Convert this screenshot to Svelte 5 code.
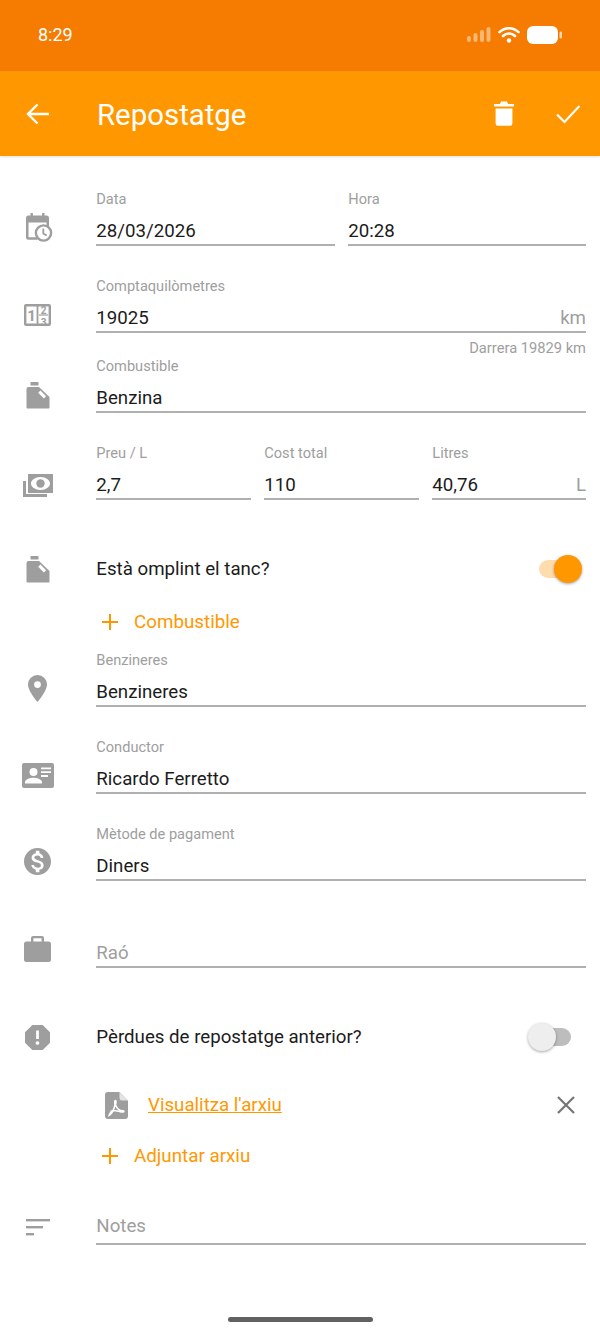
<script>
  const top = [
    { label: 'Data', value: '28/03/2026' },
    { label: 'Hora', value: '20:28' },
  ];
  const prices = [
    { label: 'Preu / L', value: '2,7' },
    { label: 'Cost total', value: '110' },
    { label: 'Litres', value: '40,76', unit: 'L' },
  ];
  const sort = [24, 17, 8];
</script>

{#snippet can()}
  <svg class="ico" width="24" height="27" viewBox="0 0 24 27">
    <rect x="4.500" y="0" width="8" height="3.500" rx="0.500" />
    <path fill-rule="evenodd" d="M2.500 5H13L23.500 15V25.500a1 1 0 0 1-1 1H1.500a1 1 0 0 1-1-1V7a2 2 0 0 1 2-2zM14.400 8.600l-2.200 2.200 5.700 5.600 2.200-2.200z" />
  </svg>
{/snippet}

{#snippet plus()}
  <svg width="18" height="18" viewBox="0 0 18 18"><path d="M9 1v16M1 9h16" fill="none" stroke="#ff9800" stroke-width="2" /></svg>
{/snippet}

<div class="page">
  <header class="status">
    <span class="time">8:29</span>
    <div class="status-icons">
      <svg width="24" height="15" viewBox="0 0 24 15" fill="#fff">
        <rect x="0" y="9" width="4" height="6" rx="2" opacity="0.45" />
        <rect x="6.500" y="6" width="4" height="9" rx="2" opacity="0.45" />
        <rect x="13" y="3" width="4" height="12" rx="2" opacity="0.45" />
        <rect x="19.500" y="0" width="4" height="15" rx="2" opacity="0.45" />
      </svg>
      <svg width="22" height="17" viewBox="0 0 22 17">
        <path d="M1.500 6.200a13.500 13.500 0 0 1 19 0M5 10a8.600 8.600 0 0 1 12 0" fill="none" stroke="#fff" stroke-width="2.600" stroke-linecap="round" />
        <circle cx="11" cy="14.500" r="2.200" fill="#fff" />
      </svg>
      <svg width="35" height="18" viewBox="0 0 35 18" fill="#fff">
        <rect x="0" y="0" width="31" height="18" rx="6" />
        <rect x="32.500" y="5.500" width="2.500" height="7" rx="1.200" opacity="0.7" />
      </svg>
    </div>
  </header>

  <header class="appbar">
    <svg class="back" width="24" height="22" viewBox="0 0 24 22"><path d="M23 11H2M11.500 1.500 2 11l9.500 9.500" fill="none" stroke="#fff" stroke-width="2.400" /></svg>
    <h1>Repostatge</h1>
    <svg class="trash" width="20" height="25" viewBox="0 0 20 25" fill="#fff">
      <path d="M0 3h6l1-2.400h6L14 3h6v2.600H0zM1.600 7.400h16.800v15.200a2.200 2.200 0 0 1-2.200 2.200H3.800a2.200 2.200 0 0 1-2.200-2.200z" />
    </svg>
    <svg class="check" width="24" height="20" viewBox="0 0 24 20"><path d="M1 10.500l7.500 7.500L23.500 2" fill="none" stroke="#fff" stroke-width="2.200" /></svg>
  </header>

  <main class="form">
    <section class="row">
      <div class="slot t24">
        <svg class="ico cal" width="27" height="29" viewBox="0 0 27 29">
          <path fill-rule="evenodd" d="M4.500 0h2.400v2.400h9.200V0h2.400v2.400h2A2.500 2.500 0 0 1 23 4.900v8.100h-2.500V9.500H2.500v14.800h9v2.500H2.500A2.500 2.500 0 0 1 0 24.300V4.900a2.500 2.500 0 0 1 2.500-2.500h2z" />
          <circle cx="17.500" cy="20" r="7.600" fill="#fff" stroke="#9e9e9e" stroke-width="2.400" />
          <path d="M17.300 15.500v4.900l3.400 2.100" fill="none" stroke="#9e9e9e" stroke-width="1.800" />
        </svg>
      </div>
      <div class="cols two">
        {#each top as f}
          <div class="field"><span class="lbl">{f.label}</span><div class="val">{f.value}</div></div>
        {/each}
      </div>
    </section>

    <section class="row r-gap">
      <div class="slot t28">
        <svg class="ico" width="27" height="22" viewBox="0 0 27 22">
          <path fill-rule="evenodd" d="M2 0h23a2 2 0 0 1 2 2v18a2 2 0 0 1-2 2H2a2 2 0 0 1-2-2V2a2 2 0 0 1 2-2zm.4 2.400v17.200h10.200V2.400zm12 0v17.200h10.200V2.400z" />
          <text x="7.500" y="16.500" text-anchor="middle" class="num">1</text>
          <text x="19.500" y="9.500" text-anchor="middle" class="num sm">2</text>
          <text x="19.500" y="21.500" text-anchor="middle" class="num sm">3</text>
          <path d="M15 11h9" stroke="#9e9e9e" stroke-width="1.200" />
        </svg>
      </div>
      <div class="stack">
        <div class="field"><span class="lbl">Comptaquilòmetres</span><div class="val">19025<span class="unit">km</span></div></div>
        <p class="hint">Darrera 19829 km</p>
      </div>
    </section>

    <section class="row">
      <div class="slot t26">{@render can()}</div>
      <div class="field"><span class="lbl">Combustible</span><div class="val">Benzina</div></div>
    </section>

    <section class="row r-gap">
      <div class="slot t31">
        <svg class="ico" width="30" height="23" viewBox="0 0 30 23">
          <path fill-rule="evenodd" d="M5 0h25v19H5zM17.500 3C12 3 8 6 8 9.500S12 16 17.500 16 27 13 27 9.500 23 3 17.500 3z" />
          <circle cx="17.500" cy="9.500" r="4.200" />
          <path d="M0 7h3v13h21v3H0z" />
        </svg>
      </div>
      <div class="cols three">
        {#each prices as f}
          <div class="field">
            <span class="lbl">{f.label}</span>
            <div class="val">{f.value}{#if f.unit}<span class="unit">{f.unit}</span>{/if}</div>
          </div>
        {/each}
      </div>
    </section>

    <section class="row line r-tank">
      <div class="slot mid">{@render can()}</div>
      <div class="toggle-row">
        <span class="txt">Està omplint el tanc?</span>
        <span class="switch on"><span class="knob"></span></span>
      </div>
    </section>

    <section class="row r-add">
      <div class="slot"></div>
      <div class="add">{@render plus()}<span>Combustible</span></div>
    </section>

    <section class="row r-small">
      <div class="slot t25">
        <svg class="ico" width="19" height="27" viewBox="0 0 19 27">
          <path fill-rule="evenodd" d="M9.500 0A9.500 9.500 0 0 1 19 9.500C19 16 9.500 27 9.500 27S0 16 0 9.500A9.500 9.500 0 0 1 9.500 0zm0 6.200a3.400 3.400 0 1 0 0 6.800 3.400 3.400 0 0 0 0-6.800z" />
        </svg>
      </div>
      <div class="field"><span class="lbl">Benzineres</span><div class="val">Benzineres</div></div>
    </section>

    <section class="row r-gap">
      <div class="slot t26">
        <svg class="ico" width="32" height="25" viewBox="0 0 32 25">
          <path fill-rule="evenodd" d="M2 0h28a2 2 0 0 1 2 2v21a2 2 0 0 1-2 2H2a2 2 0 0 1-2-2V2a2 2 0 0 1 2-2zm9.500 5a4 4 0 1 0 0 8 4 4 0 0 0 0-8zM3 20.500h17v-1.400c0-2.800-5.600-4.300-8.500-4.300S3 16.300 3 19.100zM19 4.500v1.800h10V4.500zm0 3.800v1.800h10V8.300zm0 3.800v1.800h7v-1.800z" />
        </svg>
      </div>
      <div class="field"><span class="lbl">Conductor</span><div class="val">Ricardo Ferretto</div></div>
    </section>

    <section class="row r-gap">
      <div class="slot t24">
        <svg class="ico" width="27" height="27" viewBox="2 2 20 20">
          <path d="M12 2C6.480 2 2 6.480 2 12s4.480 10 10 10 10-4.480 10-10S17.520 2 12 2zm1.410 16.090V20h-2.670v-1.930c-1.710-.36-3.160-1.460-3.270-3.400h1.960c.1 1.050.82 1.870 2.650 1.870 1.960 0 2.400-.98 2.400-1.590 0-.83-.44-1.610-2.670-2.140-2.480-.6-4.180-1.620-4.180-3.670 0-1.720 1.390-2.840 3.110-3.210V4h2.670v1.950c1.860.45 2.790 1.860 2.870 3.390H14.300c-.05-1.110-.64-1.870-2.220-1.870-1.500 0-2.400.68-2.400 1.640 0 .84.65 1.390 2.670 1.910s4.180 1.390 4.180 3.910c-.01 1.830-1.380 2.830-3.120 3.160z" />
        </svg>
      </div>
      <div class="field"><span class="lbl">Mètode de pagament</span><div class="val">Diners</div></div>
    </section>

    <section class="row r-gap">
      <div class="slot t25">
        <svg class="ico" width="27" height="26" viewBox="0 0 27 26">
          <path fill-rule="evenodd" d="M9 0h9a2 2 0 0 1 2 2v3.400h4.500A2.500 2.500 0 0 1 27 7.900v15.600a2.500 2.500 0 0 1-2.500 2.500h-22A2.500 2.500 0 0 1 0 23.500V7.900a2.500 2.500 0 0 1 2.500-2.500H7V2a2 2 0 0 1 2-2zm.4 2.200v3.200h8.200V2.200z" />
        </svg>
      </div>
      <div class="field"><span class="lbl"></span><div class="val empty">Raó</div></div>
    </section>

    <section class="row line r-tank">
      <div class="slot mid">
        <svg class="ico" width="25" height="25" viewBox="3 3 18 18">
          <path d="M15.730 3H8.270L3 8.270v7.460L8.270 21h7.460L21 15.730V8.270L15.730 3zM12 17.300c-.72 0-1.300-.58-1.300-1.300 0-.72.58-1.300 1.300-1.300.72 0 1.300.58 1.300 1.300 0 .72-.58 1.300-1.300 1.300zm1-4.300h-2V7h2v6z" />
        </svg>
      </div>
      <div class="toggle-row">
        <span class="txt">Pèrdues de repostatge anterior?</span>
        <span class="switch"><span class="knob"></span></span>
      </div>
    </section>

    <section class="row line r-file">
      <div class="slot"></div>
      <div class="file">
        <svg class="ico pdf" width="23" height="27" viewBox="0 0 23 27">
          <path d="M3 0h11.500L23 8.500V24a3 3 0 0 1-3 3H3a3 3 0 0 1-3-3V3a3 3 0 0 1 3-3z" />
          <path d="M14.500 0v6a2.500 2.500 0 0 0 2.500 2.500h6z" fill="#e3e3e3" />
          <path d="M4 23.500c2.500-1.500 5-6 6-11-.6-2.500-.4-4 .4-4s1 1.500.1 4c1 3 3.500 5.500 5 6 2 .2 3.500.2 3.500 1s-2.500.8-4.500 0c-3-.4-6-1.500-8-.6-1.500 2.800-2.500 4.300-2.500 4.600z" fill="none" stroke="#fff" stroke-width="1.500" />
        </svg>
        <a class="link" href="#top">Visualitza l'arxiu</a>
        <svg class="close" width="20" height="20" viewBox="0 0 20 20"><path d="M2 2l16 16M18 2 2 18" fill="none" stroke="#757575" stroke-width="2.200" /></svg>
      </div>
    </section>

    <section class="row r-add2">
      <div class="slot"></div>
      <div class="add">{@render plus()}<span>Adjuntar arxiu</span></div>
    </section>

    <section class="row r-notes">
      <div class="slot t31">
        <svg class="ico" width="24" height="17" viewBox="0 0 24 17">
          {#each sort as w, i}
            <rect x="0" y={i * 7} width={w} height="2.400" />
          {/each}
        </svg>
      </div>
      <div class="field"><span class="lbl"></span><div class="val empty">Notes</div></div>
    </section>
  </main>

  <div class="home"><span></span></div>
</div>

<style>
  :global(body) { margin: 0; background: #fff; }
  .page { width: 600px; height: 1336px; overflow: hidden; font-family: Roboto, "Liberation Sans", sans-serif; color: #1c1c1c; }

  .status { height: 71px; background: #f57c00; display: flex; align-items: center; justify-content: space-between; padding: 0 38px 2px; box-sizing: border-box; color: #fff; }
  .time { font-size: 18px; }
  .status-icons { display: flex; align-items: center; gap: 7px; }

  .appbar { height: 85px; background: #ff9800; display: flex; align-items: center; color: #fff; box-shadow: 0 1px 2px rgba(0, 0, 0, 0.12); position: relative; }
  .appbar h1 { margin: 2px 0 0 47px; font-size: 29.400px; font-weight: 400; flex: 1; }
  .back { margin-left: 26px; }
  .trash { margin-right: 42px; }
  .check { margin-right: 20px; }

  .form { display: flex; flex-direction: column; padding-top: 33px; }
  .row { display: flex; padding-right: 14px; }
  .slot { width: 75px; margin-right: 21px; flex: none; display: flex; justify-content: center; align-items: flex-start; box-sizing: border-box; }
  .slot.mid { align-items: center; }
  .t24 { padding-top: 24px; }
  .t25 { padding-top: 25px; }
  .t26 { padding-top: 26px; }
  .t28 { padding-top: 28px; }
  .t31 { padding-top: 31px; }
  .ico { fill: #9e9e9e; }
  .cal { margin-left: 3px; }

  .r-gap { margin-top: 30px; }
  .r-tank { margin-top: 49px; }
  .r-add { margin-top: 15px; height: 36px; }
  .r-small { margin-top: 10px; }
  .r-file { margin-top: 28px; }
  .r-add2 { margin-top: 13px; height: 36px; }
  .r-notes { margin-top: 14px; }
  .r-notes .val { padding-top: 5px; }

  .stack { flex: 1; min-width: 0; }
  .cols { flex: 1; display: grid; gap: 13px; }
  .cols.two { grid-template-columns: 239px 238px; }
  .cols.three { grid-template-columns: 155px 155px 154px; }

  .field { flex: 1; min-width: 0; display: flex; flex-direction: column; }
  .lbl { height: 20px; padding-left: 0.3px; font-size: 14.600px; line-height: 20px; color: #9e9e9e; }
  .val { height: 37px; box-sizing: border-box; padding: 9px 0 0 0.3px; font-size: 18.700px; line-height: 26px; border-bottom: 2px solid #b0b0b0; display: flex; justify-content: space-between; }
  .val.empty { color: #9e9e9e; }
  .unit { color: #9e9e9e; }
  .hint { margin: 0; height: 23px; font-size: 14.700px; line-height: 30px; text-align: right; color: #9e9e9e; }

  .line { height: 40px; }
  .toggle-row { flex: 1; display: flex; align-items: center; justify-content: space-between; padding-right: 15px; }
  .txt { padding-left: 0.3px; font-size: 18.700px; }
  .switch { width: 32px; height: 18px; border-radius: 9px; background: #bdbdbd; position: relative; }
  .switch.on { background: #ffdcad; }
  .knob { position: absolute; left: -11px; top: -5px; width: 28px; height: 28px; border-radius: 50%; background: #eee; box-shadow: 0 1px 3px rgba(0, 0, 0, 0.35); }
  .on .knob { left: auto; right: -11px; background: #ff9800; }

  .add { display: flex; align-items: center; gap: 15px; padding-left: 5px; color: #ff9800; font-size: 18.800px; }

  .file { flex: 1; display: flex; align-items: center; padding-left: 9px; }
  .link { margin-left: 20px; flex: 1; color: #ff9800; font-size: 18.700px; text-decoration: underline; }
  .close { margin-right: 10px; }

  .num { font-family: Roboto, sans-serif; font-size: 15px; font-weight: 700; fill: #9e9e9e; }
  .num.sm { font-size: 10px; }

  .home { display: flex; justify-content: center; margin-top: 72px; }
  .home span { width: 145px; height: 5px; border-radius: 3px; background: #616161; }
</style>
